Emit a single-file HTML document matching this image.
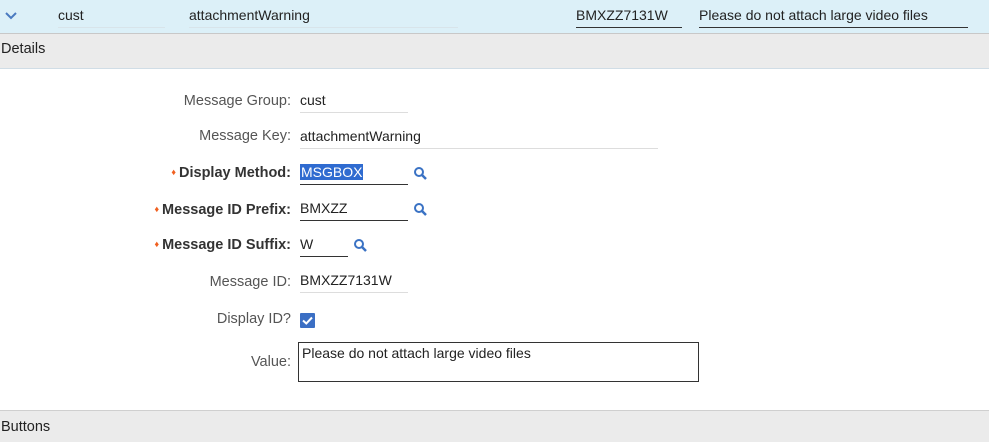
<html><head><style>
body{margin:0;width:989px;height:441px;position:relative;font-family:"Liberation Sans",sans-serif;font-size:14px;color:#222;background:#fff;overflow:hidden}
.a{position:absolute;white-space:nowrap}
.lbl{position:absolute;right:698px;text-align:right;color:#555;white-space:nowrap;font-size:14.5px}
.req{color:#333;font-weight:bold}
.req:before{content:"\2666";color:#f06020;font-size:9px;margin-right:3px;vertical-align:2px}
.f{position:absolute;left:300px;height:20px;border-bottom:1px solid #ddd;white-space:nowrap}
.fd{border-bottom:1px solid #333}
</style></head><body>
<div class="a" style="left:0;top:0;width:989px;height:33px;background:#dcf0f8;border-bottom:1px solid #c8c8c8"></div>
<svg class="a" style="left:5px;top:12px" width="12" height="8"><path d="M1 1L6 6L11 1" stroke="#4a7ac0" stroke-width="2" fill="none"/></svg>
<div class="a" style="left:58px;top:7px;width:107px;height:20px;border-bottom:1px solid #d8e4ea">cust</div>
<div class="a" style="left:189px;top:7px;width:269px;height:20px;border-bottom:1px solid #d8e4ea">attachmentWarning</div>
<div class="a" style="left:576px;top:7px;width:106px;height:20px;border-bottom:1px solid #333">BMXZZ7131W</div>
<div class="a" style="left:699px;top:7px;width:269px;height:20px;border-bottom:1px solid #333">Please do not attach large video files</div>
<div class="a" style="left:0;top:34px;width:989px;height:34px;background:#ebebeb;border-bottom:1px solid #d0dde6"></div>
<div class="a" style="left:1px;top:41px;font-size:14.5px">Details</div>

<div class="lbl" style="top:93px">Message Group:</div>
<div class="f" style="top:92px;width:108px">cust</div>
<div class="lbl" style="top:128px">Message Key:</div>
<div class="f" style="top:128px;width:358px">attachmentWarning</div>
<div class="lbl req" style="top:165px">Display Method:</div>
<div class="f fd" style="top:164px;width:108px"><span style="background:#2f6bd0;color:#fff;padding:0 1px">MSGBOX</span></div>
<div class="lbl req" style="top:202px">Message ID Prefix:</div>
<div class="f fd" style="top:200px;width:108px">BMXZZ</div>
<div class="lbl req" style="top:237px">Message ID Suffix:</div>
<div class="f fd" style="top:236px;width:48px">W</div>
<div class="lbl" style="top:274px">Message ID:</div>
<div class="f" style="top:272px;width:108px">BMXZZ7131W</div>
<div class="lbl" style="top:311px">Display ID?</div>
<svg class="a" style="left:300px;top:313px" width="15" height="15"><rect width="15" height="15" rx="1" fill="#3b6fc4"/><path d="M3 7.5L6.3 10.5L12 4.5" stroke="#fff" stroke-width="2" fill="none"/></svg>
<div class="lbl" style="top:354px">Value:</div>
<div class="a" style="left:298px;top:342px;width:401px;height:40px;border:1px solid #333;padding:2px 3px;box-sizing:border-box">Please do not attach large video files</div>

<svg class="a" style="left:413px;top:166px" width="15" height="15"><circle cx="6" cy="6" r="4" stroke="#3a72c4" stroke-width="2" fill="none"/><path d="M9 9L13 13" stroke="#3a72c4" stroke-width="2.5"/></svg>
<svg class="a" style="left:413px;top:202px" width="15" height="15"><circle cx="6" cy="6" r="4" stroke="#3a72c4" stroke-width="2" fill="none"/><path d="M9 9L13 13" stroke="#3a72c4" stroke-width="2.5"/></svg>
<svg class="a" style="left:353px;top:238px" width="15" height="15"><circle cx="6" cy="6" r="4" stroke="#3a72c4" stroke-width="2" fill="none"/><path d="M9 9L13 13" stroke="#3a72c4" stroke-width="2.5"/></svg>

<div class="a" style="left:0;top:410px;width:989px;height:31px;background:#ebebeb;border-top:1px solid #cfcfcf"></div>
<div class="a" style="left:1px;top:419px;font-size:14.5px">Buttons</div>
</body></html>
